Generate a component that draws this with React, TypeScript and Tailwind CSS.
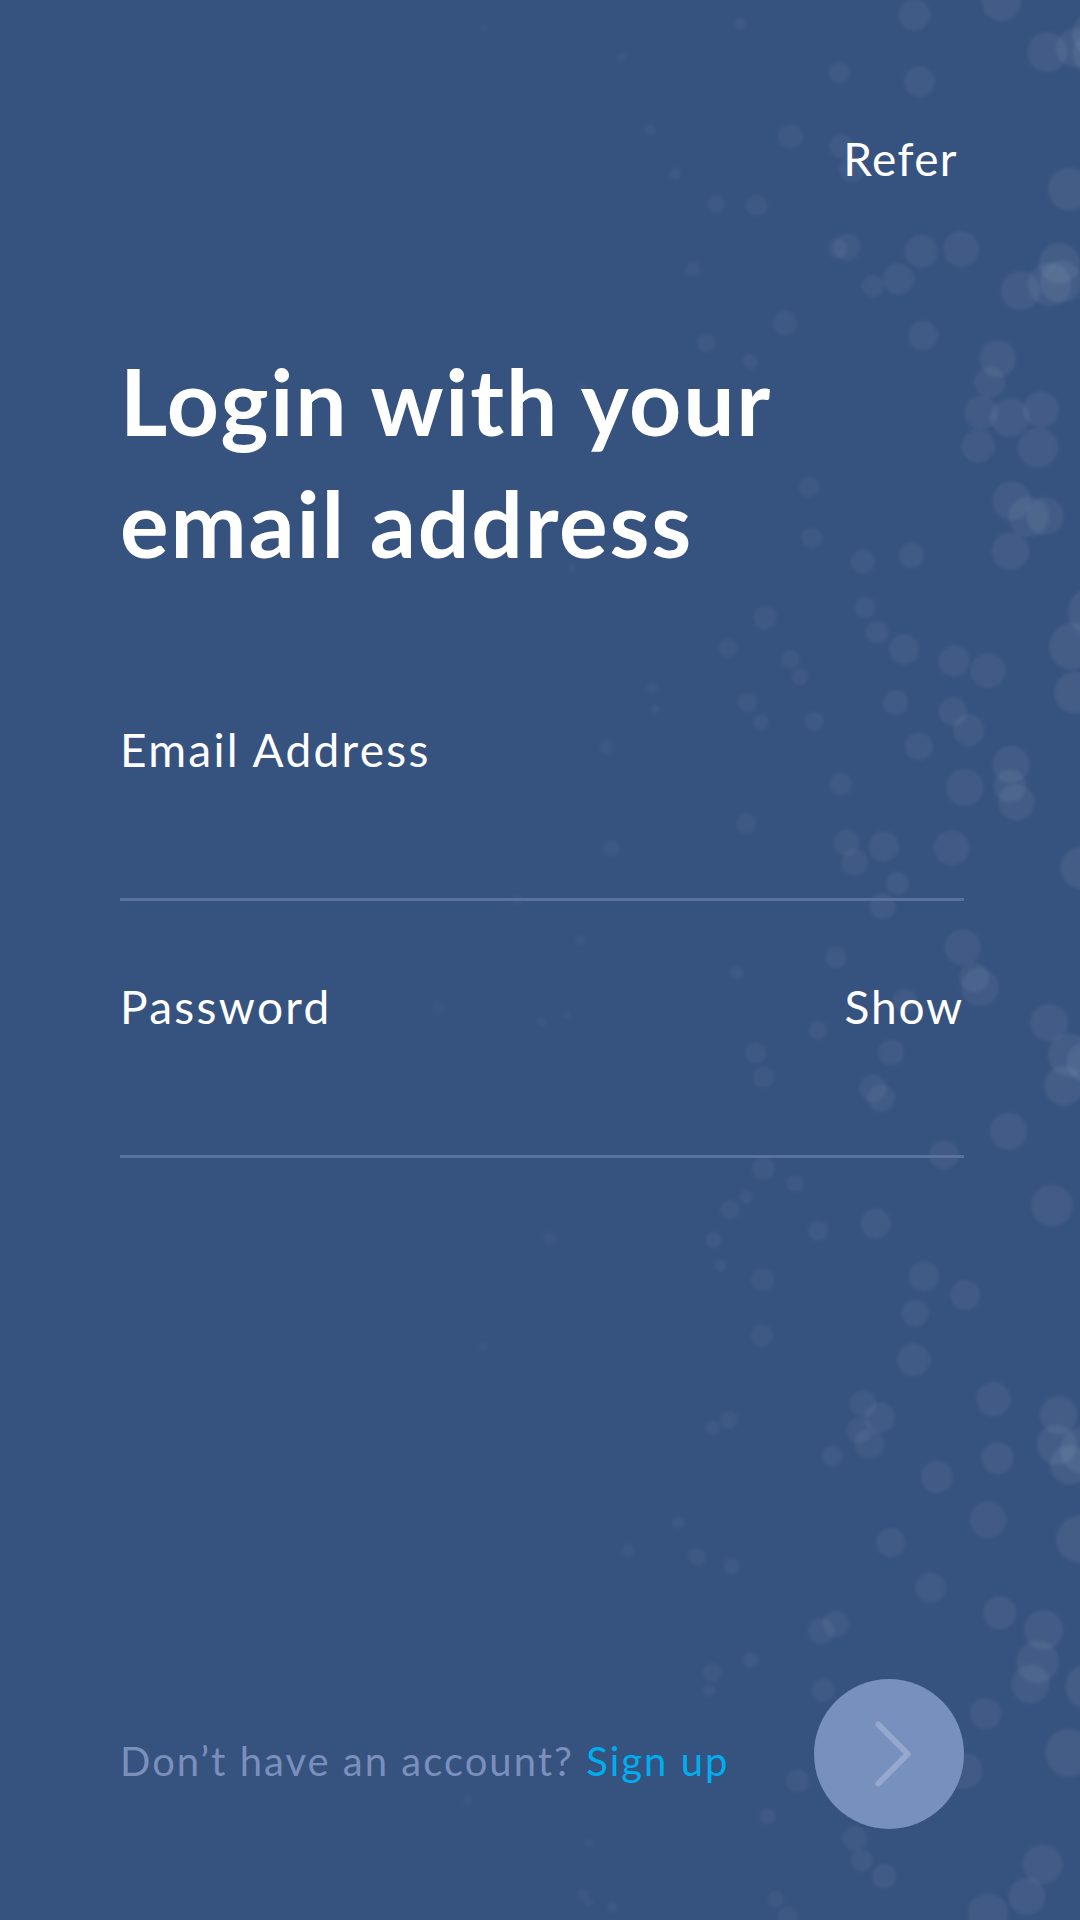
import { ChevronRight } from 'lucide-react';

// deterministic pseudo-random so the bubbles stay put between renders
const seeded = (seed: number) => () => {
  seed = (seed * 16807) % 2147483647;
  return (seed - 1) / 2147483646;
};

const rand = seeded(42);
const BUBBLES = Array.from({ length: 190 }, () => {
  const t = Math.pow(rand(), 0.55);
  const x = 430 + t * 690;
  const y = rand() * 1920;
  const r = 2 + t * t * 20 + rand() * 5;
  return { x, y, r, o: 0.02 + t * 0.045 };
});

const Bubbles = () => (
  <svg
    className="absolute inset-0"
    width="1080"
    height="1920"
    viewBox="0 0 1080 1920"
  >
    <defs>
      <filter id="soft">
        <feGaussianBlur stdDeviation="1.5" />
      </filter>
    </defs>
    <g filter="url(#soft)">
      {BUBBLES.map((b, i) => (
        <circle key={i} cx={b.x} cy={b.y} r={b.r} fill="#ffffff" fillOpacity={b.o} />
      ))}
    </g>
  </svg>
);

const Field = ({ label, action }: { label: string; action?: string }) => (
  <div className="flex justify-between items-start pb-[125px] border-b-[3px] border-[#5a72a0]">
    <span className="text-[46px] leading-none tracking-[0.05em] text-white">{label}</span>
    {action && (
      <span className="text-[46px] leading-none tracking-[0.04em] text-white">{action}</span>
    )}
  </div>
);

const App = () => {
  return (
    <div className="relative w-[1080px] h-[1920px] overflow-hidden bg-[#36527f] font-['Lato',sans-serif]">
      <Bubbles />
      <div className="relative flex flex-col h-full pl-[120px] pr-[116px]">
        <div className="flex justify-end pt-[136px] pr-[6px]">
          <span className="text-[46px] leading-none tracking-[0.03em] text-white">Refer</span>
        </div>
        <h1 className="mt-[158px] text-[91px] leading-[122px] font-bold tracking-[0.02em] text-white">
          Login with your
          <br />
          email address
        </h1>
        <div className="mt-[143px]">
          <Field label="Email Address" />
        </div>
        <div className="mt-[83px]">
          <Field label="Password" action="Show" />
        </div>
        <div className="flex-1" />
        <div className="flex items-center justify-between pb-[91px]">
          <p className="pt-[14px] text-[40px] leading-none tracking-[0.05em] text-[#7a8fbb]">
            Don’t have an account? <span className="text-[#00aeef]">Sign up</span>
          </p>
          <button className="flex items-center justify-center w-[150px] h-[150px] rounded-full bg-[#7790bd]">
            <ChevronRight size={118} strokeWidth={1.2} className="text-[#95a9cf] ml-[8px]" />
          </button>
        </div>
      </div>
    </div>
  );
};

export default App;
